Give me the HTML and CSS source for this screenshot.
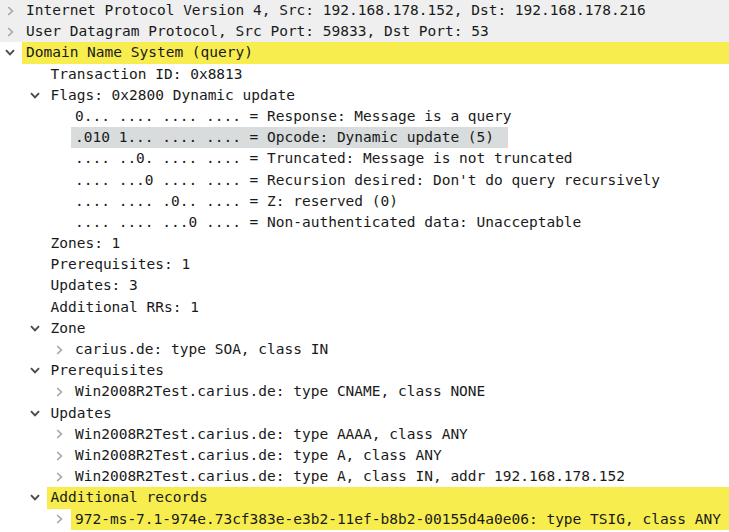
FILE: index.html
```html
<!DOCTYPE html>
<html lang="en">

<head>
	<meta charset="UTF-8">
	<title>Packet details</title>
	<link rel="stylesheet" href="styles.css">
</head>

<body>
	<div class="tree">
		<div class="row shaded lvl-0"><span class="tog closed"></span><span class="label">Internet Protocol Version 4, Src: 192.168.178.152, Dst: 192.168.178.216</span></div>
		<div class="row shaded lvl-0"><span class="tog closed"></span><span class="label">User Datagram Protocol, Src Port: 59833, Dst Port: 53</span></div>
		<div class="row lvl-0"><span class="tog open"></span><span class="label mark">Domain Name System (query)</span></div>
		<div class="row lvl-1"><span class="tog"></span><span class="label">Transaction ID: 0x8813</span></div>
		<div class="row lvl-1"><span class="tog open"></span><span class="label">Flags: 0x2800 Dynamic update</span></div>
		<div class="row lvl-2"><span class="tog"></span><span class="label">0... .... .... .... = Response: Message is a query</span></div>
		<div class="row lvl-2"><span class="tog"></span><span class="label selected">.010 1... .... .... = Opcode: Dynamic update (5)</span></div>
		<div class="row lvl-2"><span class="tog"></span><span class="label">.... ..0. .... .... = Truncated: Message is not truncated</span></div>
		<div class="row lvl-2"><span class="tog"></span><span class="label">.... ...0 .... .... = Recursion desired: Don't do query recursively</span></div>
		<div class="row lvl-2"><span class="tog"></span><span class="label">.... .... .0.. .... = Z: reserved (0)</span></div>
		<div class="row lvl-2"><span class="tog"></span><span class="label">.... .... ...0 .... = Non-authenticated data: Unacceptable</span></div>
		<div class="row lvl-1"><span class="tog"></span><span class="label">Zones: 1</span></div>
		<div class="row lvl-1"><span class="tog"></span><span class="label">Prerequisites: 1</span></div>
		<div class="row lvl-1"><span class="tog"></span><span class="label">Updates: 3</span></div>
		<div class="row lvl-1"><span class="tog"></span><span class="label">Additional RRs: 1</span></div>
		<div class="row lvl-1"><span class="tog open"></span><span class="label">Zone</span></div>
		<div class="row lvl-2"><span class="tog closed"></span><span class="label">carius.de: type SOA, class IN</span></div>
		<div class="row lvl-1"><span class="tog open"></span><span class="label">Prerequisites</span></div>
		<div class="row lvl-2"><span class="tog closed"></span><span class="label">Win2008R2Test.carius.de: type CNAME, class NONE</span></div>
		<div class="row lvl-1"><span class="tog open"></span><span class="label">Updates</span></div>
		<div class="row lvl-2"><span class="tog closed"></span><span class="label">Win2008R2Test.carius.de: type AAAA, class ANY</span></div>
		<div class="row lvl-2"><span class="tog closed"></span><span class="label">Win2008R2Test.carius.de: type A, class ANY</span></div>
		<div class="row lvl-2"><span class="tog closed"></span><span class="label">Win2008R2Test.carius.de: type A, class IN, addr 192.168.178.152</span></div>
		<div class="row lvl-1"><span class="tog open"></span><span class="label mark">Additional records</span></div>
		<div class="row lvl-2"><span class="tog closed"></span><span class="label mark">972-ms-7.1-974e.73cf383e-e3b2-11ef-b8b2-00155d4a0e06: type TSIG, class ANY</span></div>
	</div>
</body>

</html>
```

FILE: styles.css
```css
body {
	margin: 0;
	padding: 0;
	background-color: #ffffff;
	overflow: hidden;
}

.tree {
	font-family: "DejaVu Sans Mono", "Liberation Mono", monospace;
	font-size: 14.5px;
	color: #1a1a1a;
}

.row {
	display: flex;
	align-items: stretch;
	height: 21.2px;
	line-height: 21.2px;
	white-space: pre;
}

.row.shaded {
	background: #efefef;
}

.lvl-0 {
	padding-left: 0;
}

.lvl-1 {
	padding-left: 24.5px;
}

.lvl-2 {
	padding-left: 49px;
}

.tog {
	flex: none;
	width: 20px;
	margin-right: 2px;
	background-repeat: no-repeat;
	background-position: center;
}

.tog.closed {
	background-image: url("data:image/svg+xml;utf8,<svg xmlns='http://www.w3.org/2000/svg' width='7' height='10' viewBox='0 0 7 10'><path d='M1.2 1 L5.4 5 L1.2 9' fill='none' stroke='%23a8a8a8' stroke-width='1.7'/></svg>");
}

.tog.open {
	background-image: url("data:image/svg+xml;utf8,<svg xmlns='http://www.w3.org/2000/svg' width='10' height='7' viewBox='0 0 10 7'><path d='M1 1.2 L5 5.4 L9 1.2' fill='none' stroke='%234a4a4a' stroke-width='1.9'/></svg>");
}

.label {
	padding: 0 4px;
}

.label.mark {
	flex: 1;
	background: #f7ed4f;
}

.label.selected {
	padding-right: 14px;
	background: #d8dcdc;
}
```
